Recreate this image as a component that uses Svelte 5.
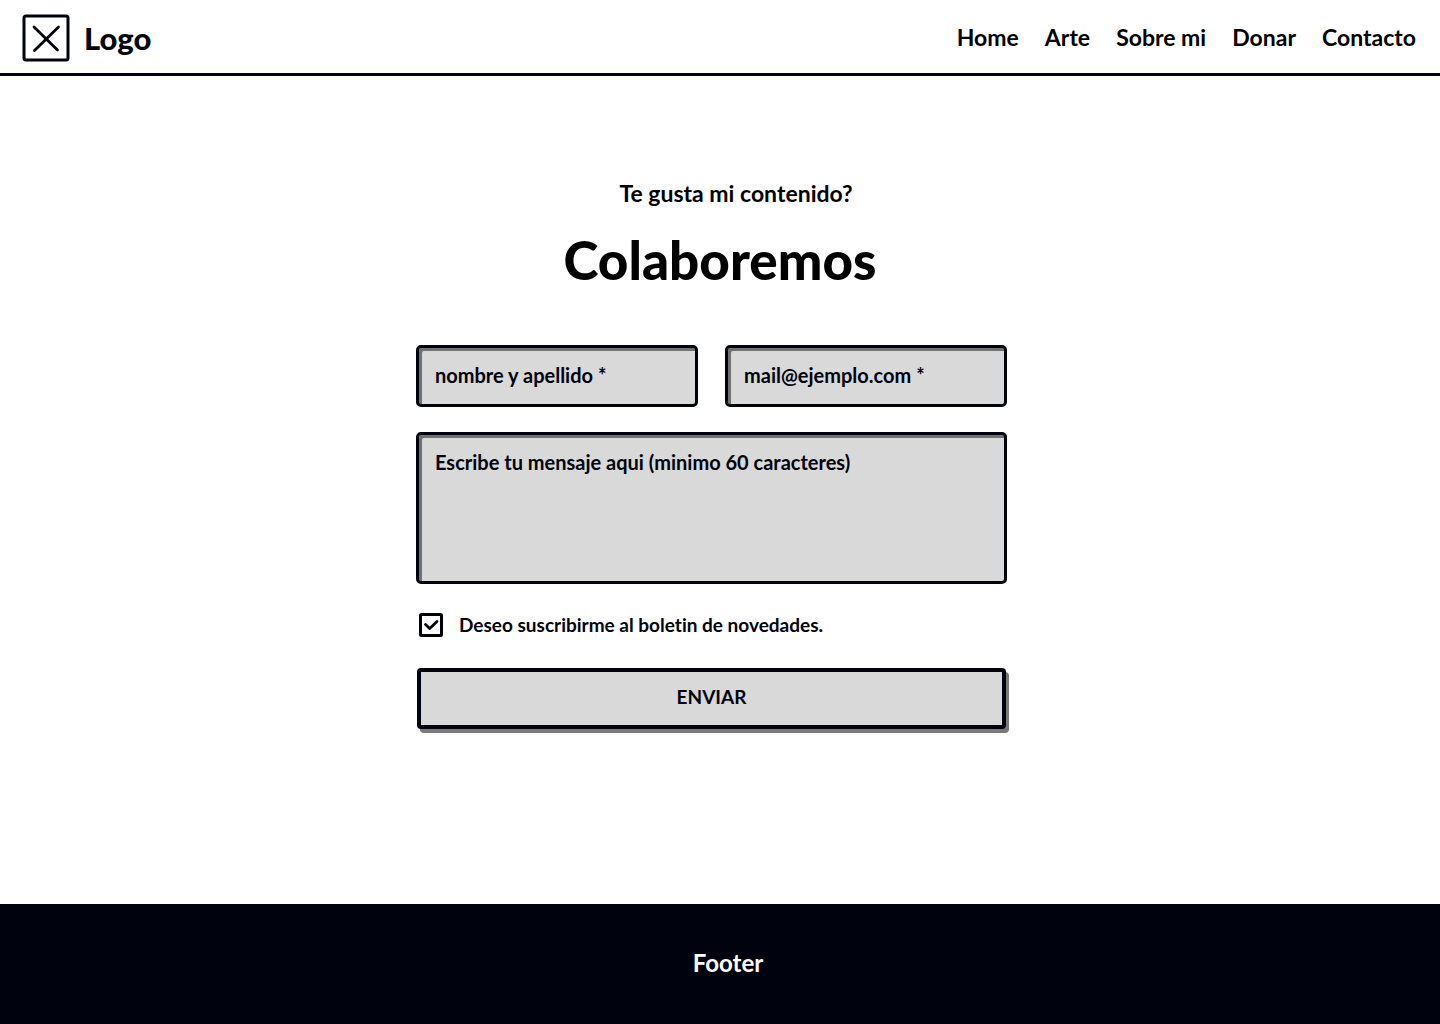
<script>
  const links = ['Home', 'Arte', 'Sobre mi', 'Donar', 'Contacto'];
  let name = $state('');
  let mail = $state('');
  let message = $state('');
  let subscribed = $state(true);
</script>

<div class="page">
  <header>
    <a class="brand" href="#home">
      <svg width="48" height="48" viewBox="0 0 48 48" fill="none" stroke="currentColor" stroke-width="3" stroke-linecap="round" aria-hidden="true">
        <rect x="2" y="2" width="44" height="44" rx="2" />
        <path d="M12 13 35.500 36M36.500 13 12.500 36.500" stroke-width="2.800" />
      </svg>
      <span>Logo</span>
    </a>
    <nav>
      {#each links as link}
        <a href="#{link}">{link}</a>
      {/each}
    </nav>
  </header>

  <main>
    <p class="lead">Te gusta mi contenido?</p>
    <h1>Colaboremos</h1>
    <form onsubmit={(e) => e.preventDefault()}>
      <div class="row">
        <input class="field" type="text" aria-label="Nombre y apellido" placeholder="nombre y apellido *" bind:value={name} />
        <input class="field" type="email" aria-label="Mail" placeholder="mail@ejemplo.com *" bind:value={mail} />
      </div>
      <textarea class="field" aria-label="Mensaje" placeholder="Escribe tu mensaje aqui (minimo 60 caracteres)" bind:value={message}></textarea>
      <label class="subscribe">
        <span class="box">
          <input type="checkbox" bind:checked={subscribed} />
          <svg width="24" height="24" viewBox="0 0 24 24" fill="none" stroke="currentColor" stroke-width="3" stroke-linecap="round" stroke-linejoin="round" aria-hidden="true">
            <rect x="1.500" y="1.500" width="21" height="21" rx="1" />
            {#if subscribed}<path d="M6.500 11.500 10.700 15.500 18 8.500" stroke-width="2.800" />{/if}
          </svg>
        </span>
        <span>Deseo suscribirme al boletin de novedades.</span>
      </label>
      <button type="submit">ENVIAR</button>
    </form>
  </main>

  <footer>Footer</footer>
</div>

<style>
  :global(body) {
    margin: 0;
    background: #fff;
  }
  .page {
    display: flex;
    flex-direction: column;
    min-height: 100vh;
    color: #000;
    font-family: Lato, "Open Sans", sans-serif;
    font-weight: 700;
    font-variant-ligatures: none;
  }
  header {
    display: flex;
    align-items: center;
    justify-content: space-between;
    flex-wrap: wrap;
    padding: 14px 24px 11px 22px;
    border-bottom: 3px solid #00020d;
  }
  a {
    color: inherit;
    text-decoration: none;
  }
  .brand {
    display: flex;
    align-items: center;
    gap: 14px;
    color: #00020d;
    font-size: 31px;
    line-height: 48px;
    font-weight: 900;
  }
  nav {
    display: flex;
    flex-wrap: wrap;
    gap: 4px 26px;
    padding-bottom: 2px;
    font-size: 23px;
    line-height: 32px;
  }
  main {
    flex: 1;
    display: flex;
    flex-direction: column;
    align-items: center;
    padding: 101px 16px 40px;
  }
  .lead {
    margin: 0;
    padding-left: 32px;
    font-size: 23px;
    line-height: 32px;
  }
  h1 {
    margin: 15px 0 49px;
    font-size: 53px;
    line-height: 72px;
    font-weight: 900;
  }
  form {
    display: flex;
    flex-direction: column;
    width: 100%;
    max-width: 591px;
    margin-right: 17px;
    color: #00020d;
    font-size: 20px;
    line-height: 28px;
  }
  .row {
    display: grid;
    grid-template-columns: 1fr 1fr;
    gap: 27px;
    margin-bottom: 25px;
  }
  .field {
    box-sizing: border-box;
    display: block;
    width: 100%;
    min-width: 0;
    height: 62px;
    margin: 0;
    padding: 11px 16px 13px;
    border: 3px solid #00020d;
    border-radius: 5px;
    background: #d9d9d9;
    box-shadow: inset 3px 3px #717171;
    color: inherit;
    font: inherit;
    outline-offset: 2px;
  }
  textarea.field {
    height: 152px;
    padding-top: 13px;
    resize: none;
  }
  .field::placeholder {
    color: #00020d;
    opacity: 1;
  }
  .subscribe {
    display: flex;
    align-items: center;
    gap: 16px;
    margin: 27px 3px 29px;
    font-size: 19px;
  }
  .box {
    display: grid;
    flex: none;
  }
  .box > * {
    grid-area: 1 / 1;
  }
  .box input {
    width: 24px;
    height: 24px;
    margin: 0;
    opacity: 0;
  }
  button {
    margin: 0 1px;
    padding: 11px 16px 14px;
    border: 4px solid #00020d;
    border-radius: 4px;
    background: #d9d9d9;
    box-shadow: 3px 4px #797979;
    color: inherit;
    font: inherit;
    font-size: 19px;
  }
  footer {
    padding: 43px 0 45px 16px;
    background: #00020d;
    color: #fff;
    font-size: 24px;
    line-height: 32px;
    text-align: center;
  }
</style>
